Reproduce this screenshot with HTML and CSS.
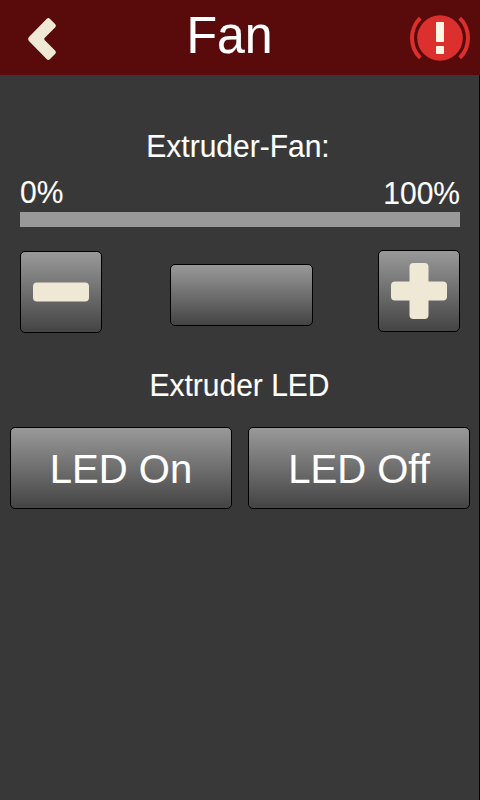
FILE: index.html
```html
<!DOCTYPE html>
<html lang="en">
<head>
<meta charset="utf-8">
<title>Fan</title>
<link rel="stylesheet" href="styles.css">
</head>
<body>
<div class="screen">
  <header class="topbar">
    <button class="icon-button" aria-label="Back">
      <svg width="28" height="42" viewBox="0 0 28 42"><path fill="#efe8d5" d="M18.800 .7Q20.300 -.6 21.800 .7L27.300 6.200Q28.700 7.700 27.300 9.200L16.600 19.900Q15.800 21 16.600 22.100L27.300 32.800Q28.700 34.300 27.300 35.800L21.800 41.300Q20.300 42.600 18.800 41.300L.7 22.700Q-.5 21 .7 19.300Z"/></svg>
    </button>
    <h1 class="title"><span class="text">Fan</span></h1>
    <button class="icon-button stop" aria-label="Emergency stop">
      <svg width="60" height="46" viewBox="0 0 60 46"><circle cx="30" cy="23" r="22.800" fill="#dc302f"/><path d="M10.200 3.200A28 28 0 0 0 10.200 42.800M49.800 3.200A28 28 0 0 1 49.800 42.800" fill="none" stroke="#dc302f" stroke-width="4"/><rect x="26" y="7" width="8" height="20" rx=".8" fill="#fdf6e3"/><rect x="26" y="31" width="8" height="8" rx=".8" fill="#fdf6e3"/></svg>
    </button>
  </header>
  <main class="content">
    <h2 class="label fan-label"><span class="text">Extruder-Fan:</span></h2>
    <div class="scale"><span class="text zero">0%</span><span class="text hundred">100%</span></div>
    <div class="progress"></div>
    <div class="controls">
      <button class="button step minus" aria-label="Decrease">
        <svg width="56" height="56" viewBox="0 0 56 56"><rect y="18.500" width="56" height="19" rx="4" fill="#efe8d5"/></svg>
      </button>
      <div class="button value"></div>
      <button class="button step" aria-label="Increase">
        <svg width="56" height="56" viewBox="0 0 56 56"><path fill="#efe8d5" d="M22.500 0h11q4 0 4 4v14.500h14.500q4 0 4 4v11q0 4-4 4h-14.500v14.500q0 4-4 4h-11q-4 0-4-4v-14.500h-14.500q-4 0-4-4v-11q0-4 4-4h14.500v-14.500q0-4 4-4z"/></svg>
      </button>
    </div>
    <h2 class="label led-label"><span class="text">Extruder LED</span></h2>
    <div class="led-row">
      <button class="button led"><span class="text">LED On</span></button>
      <button class="button led"><span class="text">LED Off</span></button>
    </div>
  </main>
</div>
</body>
</html>
```
FILE: styles.css
```css
* { box-sizing: border-box; }

body {
  margin: 0;
  background: #383838;
  color: #fff;
  font-family: "Liberation Sans", sans-serif;
}

.screen {
  width: 480px;
  height: 800px;
  display: flex;
  flex-direction: column;
}

button {
  padding: 0;
  border: 0;
  background: none;
  color: inherit;
  font: inherit;
}

svg {
  display: block;
  overflow: visible;
}

.text {
  display: inline-block;
  transform: scaleY(1.03);
  transform-origin: 50% 80%;
  -webkit-text-stroke: .1px #fff;
}

.topbar {
  height: 75px;
  flex: none;
  display: grid;
  grid-template-columns: 84px 1fr 80px;
  align-items: center;
  background: #590a0a;
}

.icon-button {
  display: flex;
  justify-content: center;
  padding-top: 3px;
}

.stop { padding-top: 1px; }

.title {
  margin: 0;
  padding: 0 25px 3px 0;
  font-size: 50px;
  font-weight: 400;
  line-height: 60px;
  text-align: center;
}

.title .text { transform: scaleY(1.05); }

.content {
  flex: 1;
  border-right: 1px solid #000;
}

.label {
  margin: 0;
  font-size: 30px;
  font-weight: 400;
  line-height: 34px;
  text-align: center;
}

.fan-label { padding: 55px 3px 0 0; }

.scale {
  display: flex;
  justify-content: space-between;
  height: 48px;
  padding: 12px 19px 0 20px;
  font-size: 30px;
  line-height: 34px;
}

.hundred { padding-top: 1px; }

.progress {
  height: 15px;
  margin: 0 19px 0 20px;
  background: #999;
}

.controls {
  display: flex;
  justify-content: space-between;
  align-items: flex-start;
  padding: 23px 19px 0 20px;
}

.button {
  display: flex;
  align-items: center;
  justify-content: center;
  border: 1px solid #000;
  border-radius: 5px;
  background: linear-gradient(#999, #444);
}

.step {
  width: 82px;
  height: 82px;
}

.minus { margin-top: 1px; }

.value {
  width: 143px;
  height: 62px;
  margin: 14px 0 0 3px;
}

.led-label { padding-top: 36px; }

.led-row {
  display: flex;
  gap: 16px;
  padding: 24px 9px 0 10px;
}

.led {
  width: 222px;
  height: 82px;
  padding-top: 2px;
  font-size: 40px;
}
```
